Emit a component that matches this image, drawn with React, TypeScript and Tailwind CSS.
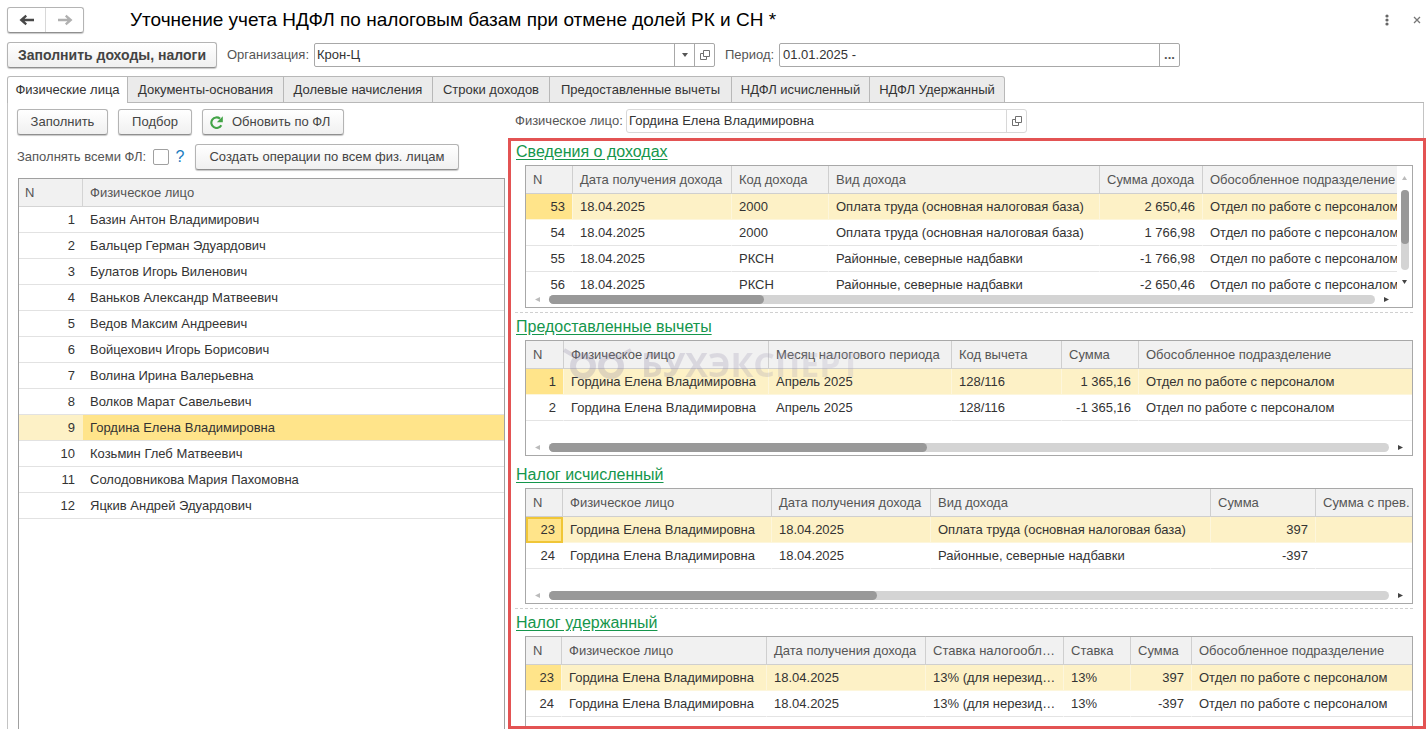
import React from "react";

type Column = { title: string; width?: string; align?: "right" };

interface GridProps {
  label: string;
  columns: Column[];
  rows: string[][];
  selected: number;
  focused?: boolean;
}

const people = [
  "Базин Антон Владимирович",
  "Бальцер Герман Эдуардович",
  "Булатов Игорь Виленович",
  "Ваньков Александр Матвеевич",
  "Ведов Максим Андреевич",
  "Войцехович Игорь Борисович",
  "Волина Ирина Валерьевна",
  "Волков Марат Савельевич",
  "Гордина Елена Владимировна",
  "Козьмин Глеб Матвеевич",
  "Солодовникова Мария Пахомовна",
  "Яцкив Андрей Эдуардович",
];

const tabs = [
  { title: "Физические лица", width: "w-[121px]" },
  { title: "Документы-основания", width: "w-[156px]" },
  { title: "Долевые начисления", width: "w-[149px]" },
  { title: "Строки доходов", width: "w-[117px]" },
  { title: "Предоставленные вычеты", width: "w-[182px]" },
  { title: "НДФЛ исчисленный", width: "w-[138px]" },
  { title: "НДФЛ Удержанный", width: "w-[135px]" },
];

const person = "Гордина Елена Владимировна";
const department = "Отдел по работе с персоналом";
const mainBase = "Оплата труда (основная налоговая база)";
const northern = "Районные, северные надбавки";
const date = "18.04.2025";

const incomeColumns: Column[] = [
  { title: "N", width: "w-[47px]", align: "right" },
  { title: "Дата получения дохода", width: "w-[159px]" },
  { title: "Код дохода", width: "w-[97px]" },
  { title: "Вид дохода", width: "w-[271px]" },
  { title: "Сумма дохода", width: "w-[103px]", align: "right" },
  { title: "Обособленное подразделение" },
];

const incomeRows = [
  ["53", date, "2000", mainBase, "2 650,46", department],
  ["54", date, "2000", mainBase, "1 766,98", department],
  ["55", date, "РКСН", northern, "-1 766,98", department],
  ["56", date, "РКСН", northern, "-2 650,46", department],
];

const deductionColumns: Column[] = [
  { title: "N", width: "w-[38px]", align: "right" },
  { title: "Физическое лицо", width: "w-[205px]" },
  { title: "Месяц налогового периода", width: "w-[183px]" },
  { title: "Код вычета", width: "w-[110px]" },
  { title: "Сумма", width: "w-[77px]", align: "right" },
  { title: "Обособленное подразделение" },
];

const deductionRows = [
  ["1", person, "Апрель 2025", "128/116", "1 365,16", department],
  ["2", person, "Апрель 2025", "128/116", "-1 365,16", department],
];

const accruedColumns: Column[] = [
  { title: "N", width: "w-[37px]", align: "right" },
  { title: "Физическое лицо", width: "w-[209px]" },
  { title: "Дата получения дохода", width: "w-[159px]" },
  { title: "Вид дохода", width: "w-[280px]" },
  { title: "Сумма", width: "w-[105px]", align: "right" },
  { title: "Сумма с прев." },
];

const accruedRows = [
  ["23", person, date, mainBase, "397", ""],
  ["24", person, date, northern, "-397", ""],
];

const withheldColumns: Column[] = [
  { title: "N", width: "w-[36px]", align: "right" },
  { title: "Физическое лицо", width: "w-[205px]" },
  { title: "Дата получения дохода", width: "w-[159px]" },
  { title: "Ставка налогообл…", width: "w-[138px]" },
  { title: "Ставка", width: "w-[67px]" },
  { title: "Сумма", width: "w-[61px]", align: "right" },
  { title: "Обособленное подразделение" },
];

const withheldRows = [
  ["23", person, date, "13% (для нерезид…", "13%", "397", department],
  ["24", person, date, "13% (для нерезид…", "13%", "-397", department],
];

const buttonStyle =
  "h-[26px] rounded-[3px] border border-[#b4b4b4] border-b-[#8f8f8f] bg-linear-to-b from-white to-[#f0f0f0] text-[#444] shadow-[0_1px_1px_#c8c8c8] whitespace-nowrap";

const OpenIcon = () => (
  <svg width="12" height="12" viewBox="0 0 12 12" fill="none" stroke="#707070">
    <path d="M4.5 1.5h6v6h-6z" />
    <path d="M4.5 4.5h-3v6h6v-3" />
  </svg>
);

const Arrow = ({ flip }: { flip?: boolean }) => (
  <svg
    width="16"
    height="12"
    viewBox="0 0 16 12"
    className={flip ? "-scale-x-100" : ""}
    fill={flip ? "#b0b0b0" : "#484848"}
  >
    <path d="M0.5 6 6.5 0.8 8 2.4 5.6 4.7H15v2.6H5.6L8 9.6 6.5 11.2z" />
  </svg>
);

const Grid = ({ label, columns, rows, selected, focused }: GridProps) => (
  <table
    aria-label={label}
    className="w-full table-fixed border-separate border-spacing-0 whitespace-nowrap"
  >
    <thead>
      <tr>
        {columns.map((col, i) => (
          <th
            key={i}
            className={`h-7 border-b border-[#cfcfcf] bg-[#f1f1f1] pl-[7px] text-left font-normal text-[#555] ${col.width ?? ""} ${i < columns.length - 1 ? "border-r" : ""} ${i === 0 ? "pl-[6px]" : ""}`}
          >
            {col.title}
          </th>
        ))}
      </tr>
    </thead>
    <tbody>
      {rows.map((row, r) => (
        <tr key={r}>
          {row.map((cell, i) => {
            const active = r === selected;
            return (
              <td
                key={i}
                className={`h-[26px] border-b text-[#333] ${columns[i].align === "right" ? "pr-[7px] text-right" : "pl-[7px]"} ${
                  active
                    ? `border-[#fdf6dc] ${i < columns.length - 1 ? "border-r" : ""} ${i === 0 ? "bg-[#ffe48a]" : "bg-[#fdf1c6]"}`
                    : `border-[#e4e4e4] ${i < columns.length - 1 ? "border-r border-r-transparent" : ""}`
                } ${active && i === 0 && focused ? "outline-2 -outline-offset-2 outline-[#f0c637]" : ""}`}
              >
                {cell}
              </td>
            );
          })}
        </tr>
      ))}
    </tbody>
  </table>
);

// horizontal scroll strip under a grid
const ScrollStrip = ({ thumb, inset }: { thumb: string; inset?: boolean }) => (
  <div
    className={`flex h-3 items-start gap-[9px] bg-white pl-[9px] ${inset ? "pr-[23px]" : "pr-[9px]"}`}
  >
    <svg width="5" height="9" viewBox="0 0 5 9" fill="#bbb">
      <path d="M5 2v5L0 4.5z" />
    </svg>
    <div className="h-[9px] flex-1 rounded-full bg-[#d4d4d4]">
      <div className={`h-[9px] rounded-full bg-[#999] ${thumb}`} />
    </div>
    <svg width="5" height="9" viewBox="0 0 5 9" fill="#444">
      <path d="M0 2v5l5-2.5z" />
    </svg>
  </div>
);

const Heading = ({ children }: { children: React.ReactNode }) => (
  <h2 className="flex h-[27px] items-center pl-px text-base text-[#15964c]">
    <a href="#" className="underline underline-offset-2">
      {children}
    </a>
  </h2>
);

const Watermark = () => (
  <div
    aria-hidden="true"
    className="pointer-events-none absolute top-[7px] left-[37px] flex items-center gap-[6px] opacity-25"
  >
    <svg width="72" height="32" viewBox="0 0 72 32" fill="none" stroke="#8880a0">
      <circle cx="20" cy="18" r="10" strokeWidth="6" />
      <circle cx="48" cy="18" r="10" strokeWidth="6" />
      <path d="M1 2l12 7M68 2l-12 7" strokeWidth="4" />
    </svg>
    <span className="bg-linear-to-r from-[#8880a0] to-[#b5b0c4] bg-clip-text font-['Open_Sans',sans-serif] text-[34px] leading-8 font-bold text-transparent">
      БУХЭКСПЕРТ
    </span>
  </div>
);

const App = () => {
  return (
    <div className="flex min-h-screen flex-col bg-white pl-[7px] font-['Liberation_Sans',Arial,sans-serif] text-[13px] leading-4 text-[#333]">
      {/* TITLE BAR */}
      <header className="mb-[2px] flex h-10 items-center">
        <div className="flex h-[26px] w-[77px] rounded-[3px] border border-[#b4b4b4] border-b-[#8f8f8f] shadow-[0_1px_1px_#c8c8c8]">
          <button
            aria-label="Назад"
            className="flex flex-1 items-center justify-center border-r border-[#d8d8d8]"
          >
            <Arrow />
          </button>
          <button
            aria-label="Вперед"
            className="flex flex-1 items-center justify-center"
          >
            <Arrow flip />
          </button>
        </div>
        <h1 className="ml-[46px] flex-1 text-[19px] text-black">
          Уточнение учета НДФЛ по налоговым базам при отмене долей РК и СН *
        </h1>
        <button aria-label="Еще" className="mr-6">
          <svg width="4" height="12" viewBox="0 0 4 12" fill="#666">
            <circle cx="2" cy="2" r="1.6" />
            <circle cx="2" cy="6" r="1.6" />
            <circle cx="2" cy="10" r="1.6" />
          </svg>
        </button>
        <button aria-label="Закрыть" className="mr-[6px]">
          <svg width="8" height="8" viewBox="0 0 8 8" stroke="#777" strokeWidth="1.3">
            <path d="M1 1l6 6M7 1l-6 6" />
          </svg>
        </button>
      </header>

      {/* DOCUMENT FIELDS */}
      <div className="flex h-[26px] items-center whitespace-nowrap">
        <button className={`w-[210px] text-sm font-bold ${buttonStyle}`}>
          Заполнить доходы, налоги
        </button>
        <label htmlFor="org" className="w-[97px] pl-[10px] text-[#555]">
          Организация:
        </label>
        <div className="flex h-6 w-[401px] rounded-[2px] border border-[#a8a8a8]">
          <input
            id="org"
            defaultValue="Крон-Ц"
            className="min-w-0 flex-1 px-[2px] outline-none"
          />
          <button
            aria-label="Выбрать"
            className="flex w-5 items-center justify-center border-l border-[#a8a8a8]"
          >
            <svg width="6" height="4" viewBox="0 0 6 4" fill="#555">
              <path d="M0 0h6L3 4z" />
            </svg>
          </button>
          <button
            aria-label="Открыть"
            className="flex w-5 items-center justify-center border-l border-[#a8a8a8]"
          >
            <OpenIcon />
          </button>
        </div>
        <label htmlFor="period" className="w-16 pl-[10px] text-[#555]">
          Период:
        </label>
        <div className="flex h-6 w-[401px] rounded-[2px] border border-[#a8a8a8]">
          <input
            id="period"
            defaultValue="01.01.2025 -"
            className="min-w-0 flex-1 px-[3px] outline-none"
          />
          <button className="w-5 border-l border-[#a8a8a8] font-bold text-[#555]">
            ...
          </button>
        </div>
      </div>

      {/* TABS */}
      <nav role="tablist" className="mt-2 flex h-[27px]">
        {tabs.map((tab, i) => (
          <button
            key={tab.title}
            role="tab"
            aria-selected={i === 0}
            className={`border-t border-r border-[#b8b8b8] whitespace-nowrap ${tab.width} ${i === 0 ? "rounded-tl-[3px] border-l bg-white" : "border-b bg-[#ebebeb]"} ${i === tabs.length - 1 ? "rounded-tr-[3px]" : ""}`}
          >
            {tab.title}
          </button>
        ))}
        <div className="mr-[3px] flex-1 border-b border-[#b8b8b8]" />
      </nav>

      <main className="mr-[3px] flex flex-1 border-r border-l border-[#c4c4c4] pl-[9px] whitespace-nowrap">
        {/* PEOPLE LIST */}
        <section className="flex w-[488px] flex-col pt-[6px]">
          <div className="flex gap-[10px]">
            <button className={`w-[91px] ${buttonStyle}`}>Заполнить</button>
            <button className={`w-[74px] ${buttonStyle}`}>Подбор</button>
            <button
              className={`flex w-[142px] items-center gap-[9px] pl-[7px] ${buttonStyle}`}
            >
              <svg width="13" height="13" viewBox="0 0 13 13">
                <path
                  d="M11.3 9.2A5.3 5.3 0 1 1 10 2.6"
                  fill="none"
                  stroke="#43a447"
                  strokeWidth="2.1"
                />
                <path d="M12.8 0.2v6H6.8z" fill="#43a447" />
              </svg>
              Обновить по ФЛ
            </button>
          </div>
          <div className="mt-[9px] flex items-center">
            <label htmlFor="fill-all" className="w-[136px] text-[#555]">
              Заполнять всеми ФЛ:
            </label>
            <input
              id="fill-all"
              type="checkbox"
              className="h-4 w-4 appearance-none rounded-[2px] border border-[#a0a0a0]"
            />
            <button className="w-[26px] pr-1 text-base text-[#1a7cc0]">?</button>
            <button className={`w-[264px] ${buttonStyle}`}>
              Создать операции по всем физ. лицам
            </button>
          </div>
          <div className="mt-2 ml-px flex-1 border border-b-0 border-[#a0a0a0]">
            <table
              aria-label="Физические лица"
              className="w-full table-fixed border-separate border-spacing-0"
            >
              <thead>
                <tr className="text-left text-[#555]">
                  <th className="h-7 w-16 border-r border-b border-[#d4d4d4] bg-[#f1f1f1] px-[6px] font-normal">
                    N
                  </th>
                  <th className="h-7 border-b border-[#d4d4d4] bg-[#f1f1f1] px-[7px] font-normal">
                    Физическое лицо
                  </th>
                </tr>
              </thead>
              <tbody>
                {people.map((name, i) => (
                  <tr key={name}>
                    <td
                      className={`h-[26px] border-b border-[#e2e2e2] pr-2 text-right ${i === 8 ? "bg-[#fdf1c6]" : ""}`}
                    >
                      {i + 1}
                    </td>
                    <td
                      className={`h-[26px] border-b border-[#e2e2e2] px-[7px] ${i === 8 ? "bg-[#ffe48a]" : ""}`}
                    >
                      {name}
                    </td>
                  </tr>
                ))}
              </tbody>
            </table>
          </div>
        </section>

        {/* DETAILS OF THE SELECTED PERSON */}
        <section className="-mr-[3px] ml-[3px] flex min-w-0 flex-1 flex-col pt-[6px]">
          <div className="mb-[5px] flex items-center pl-[7px]">
            <label htmlFor="person" className="w-[111px] text-[#555]">
              Физическое лицо:
            </label>
            <div className="flex h-6 w-[401px] rounded-[3px] border border-[#d8d8d8]">
              <input
                id="person"
                readOnly
                value={person}
                className="min-w-0 flex-1 px-[2px] outline-none"
              />
              <button
                aria-label="Открыть"
                className="flex w-5 items-center justify-center border-l border-[#d8d8d8]"
              >
                <OpenIcon />
              </button>
            </div>
          </div>

          <div className="flex flex-1 flex-col border-3 border-[#e35353] pr-[10px] pl-1">
            <div className="-mt-[3px]">
              <Heading>Сведения о доходах</Heading>
            </div>
            <div className="ml-[10px] border border-[#a8a8a8]">
              <div className="flex h-[129px]">
                <div className="min-w-0 flex-1 overflow-hidden">
                  <Grid
                    label="Сведения о доходах"
                    columns={incomeColumns}
                    rows={incomeRows}
                    selected={0}
                  />
                </div>
                <div className="flex w-[15px] flex-col items-center pt-[10px]">
                  <svg width="5" height="4" viewBox="0 0 5 4" fill="#bbb">
                    <path d="M0 4h5L2.5 0z" />
                  </svg>
                  <div className="my-[10px] h-20 w-2 rounded-full bg-[#d4d4d4]">
                    <div className="h-[54px] w-2 rounded-full bg-[#999]" />
                  </div>
                  <svg width="5" height="4" viewBox="0 0 5 4" fill="#444">
                    <path d="M0 0h5L2.5 4z" />
                  </svg>
                </div>
              </div>
              <ScrollStrip thumb="w-[26%]" inset />
            </div>

            <div className="mt-1 border-t border-dashed border-[#d0d0d0]">
              <Heading>Предоставленные вычеты</Heading>
            </div>
            <div className="relative ml-[10px] border border-[#a8a8a8]">
              <div className="h-[102px]">
                <Grid
                  label="Предоставленные вычеты"
                  columns={deductionColumns}
                  rows={deductionRows}
                  selected={0}
                />
              </div>
              <ScrollStrip thumb="w-[45%]" />
              <Watermark />
            </div>

            <div className="mt-1 border-t border-transparent">
              <Heading>Налог исчисленный</Heading>
            </div>
            <div className="ml-[10px] border border-[#a8a8a8]">
              <div className="h-[102px]">
                <Grid
                  label="Налог исчисленный"
                  columns={accruedColumns}
                  rows={accruedRows}
                  selected={0}
                  focused
                />
              </div>
              <ScrollStrip thumb="w-[39%]" />
            </div>

            <div className="mt-1 border-t border-dashed border-[#d0d0d0]">
              <Heading>Налог удержанный</Heading>
            </div>
            <div className="ml-[10px] flex-1 border border-b-0 border-[#a8a8a8]">
              <Grid
                label="Налог удержанный"
                columns={withheldColumns}
                rows={withheldRows}
                selected={0}
              />
            </div>
          </div>
        </section>
      </main>
    </div>
  );
};

export default App;
